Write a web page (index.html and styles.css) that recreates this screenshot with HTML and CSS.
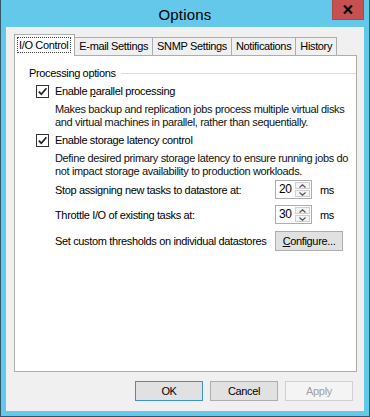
FILE: index.html
```html
<!DOCTYPE html>
<html lang="en">
<head>
  <meta charset="UTF-8" />
  <title>Options</title>
  <link rel="stylesheet" href="styles.css">
</head>
<body>
  <div class="window">
    <div class="titlebar">
      <span class="title">Options</span>
      <button class="close">
        <svg width="10" height="9" viewBox="0 0 10 9"><path d="M1 0.5 L9 8.5 M9 0.5 L1 8.5" stroke="#000" stroke-width="2.2"/></svg>
      </button>
    </div>

    <div class="client">
      <div class="tabs">
        <div class="tab active"><span class="focus">I/O Control</span></div>
        <div class="tab">E-mail Settings</div>
        <div class="tab">SNMP Settings</div>
        <div class="tab">Notifications</div>
        <div class="tab">History</div>
      </div>

      <div class="panel">
        <div class="group-title"><span>Processing options</span><div class="rule"></div></div>

        <label class="check first">
          <span class="box"><svg width="11" height="11" viewBox="0 0 11 11"><path d="M1.8 5.6 L4.3 8.2 L9.4 2.3" fill="none" stroke="#222" stroke-width="1.7"/></svg></span>
          <span>Enable <u>p</u>arallel processing</span>
        </label>
        <p class="desc">Makes backup and replication jobs process multiple virtual disks and virtual machines in parallel, rather than sequentially.</p>

        <label class="check">
          <span class="box"><svg width="11" height="11" viewBox="0 0 11 11"><path d="M1.8 5.6 L4.3 8.2 L9.4 2.3" fill="none" stroke="#222" stroke-width="1.7"/></svg></span>
          <span>Enable storage latency control</span>
        </label>
        <p class="desc">Define desired primary storage latency to ensure running jobs do not impact storage availability to production workloads.</p>

        <div class="row">
          <span class="label">Stop assigning new tasks to datastore at:</span>
          <div class="spin">
            <span class="value">20</span>
            <div class="arrows">
              <span><svg width="7" height="4" viewBox="0 0 7 4"><path d="M0.5 3.5 L3.5 0.8 L6.5 3.5" fill="none" stroke="#555" stroke-width="1.2"/></svg></span>
              <span><svg width="7" height="4" viewBox="0 0 7 4"><path d="M0.5 0.5 L3.5 3.2 L6.5 0.5" fill="none" stroke="#555" stroke-width="1.2"/></svg></span>
            </div>
          </div>
          <span class="unit">ms</span>
        </div>

        <div class="row">
          <span class="label">Throttle I/O of existing tasks at:</span>
          <div class="spin">
            <span class="value">30</span>
            <div class="arrows">
              <span><svg width="7" height="4" viewBox="0 0 7 4"><path d="M0.5 3.5 L3.5 0.8 L6.5 3.5" fill="none" stroke="#555" stroke-width="1.2"/></svg></span>
              <span><svg width="7" height="4" viewBox="0 0 7 4"><path d="M0.5 0.5 L3.5 3.2 L6.5 0.5" fill="none" stroke="#555" stroke-width="1.2"/></svg></span>
            </div>
          </div>
          <span class="unit">ms</span>
        </div>

        <div class="row last">
          <span class="label">Set custom thresholds on individual datastores</span>
          <button class="btn configure"><u>C</u>onfigure...</button>
        </div>
      </div>

      <div class="buttons">
        <button class="btn default">OK</button>
        <button class="btn">Cancel</button>
        <button class="btn disabled">Apply</button>
      </div>
    </div>
  </div>
</body>
</html>
```

FILE: styles.css
```css
body {
  margin: 0;
  font-family: 'Liberation Sans', Arial, sans-serif;
  font-size: 11px;
  color: #000;
}

.window {
  width: 370px;
  height: 417px;
  box-sizing: border-box;
  background: #64c8eb;
  border: 1px solid #2f5868;
  border-top: none;
  display: flex;
  flex-direction: column;
}

.titlebar {
  height: 27px;
  display: flex;
  align-items: center;
  justify-content: center;
  position: relative;
}

.title {
  font-size: 15px;
  color: #000;
  margin-top: 1px;
  letter-spacing: 0.2px;
}

.close {
  position: absolute;
  top: 0;
  right: 5px;
  width: 32px;
  height: 20px;
  border: 1px solid #a84a42;
  border-top: none;
  background: #c75050;
  display: flex;
  align-items: center;
  justify-content: center;
  padding: 0;
}

.client {
  flex: 1;
  margin: 0 5px 5px 5px;
  background: #f0f0f0;
  display: flex;
  flex-direction: column;
  padding: 7px 7px 0 9px;
}

.tabs {
  display: flex;
  align-items: flex-end;
  height: 21px;
  position: relative;
  z-index: 2;
  letter-spacing: -0.35px;
}

.tab {
  height: 18px;
  box-sizing: border-box;
  border: 1px solid #adadad;
  border-bottom: none;
  border-left: none;
  background: #f0f0f0;
  padding: 0 4px;
  line-height: 17px;
  white-space: nowrap;
}

.tab.active {
  height: 22px;
  border-left: 1px solid #adadad;
  background: #fff;
  padding: 3px 4px 0 3px;
  margin-bottom: -1px;
  margin-left: -1px;
  line-height: 14px;
}

.focus {
  display: inline-block;
  outline: 1px dotted #444;
  outline-offset: 0;
  line-height: 14px;
  padding: 0 2px 0 1px;
}

.panel {
  height: 317px;
  box-sizing: border-box;
  background: #fff;
  border: 1px solid #adadad;
  margin-left: -1px;
  padding: 9px 0 0 14px;
  letter-spacing: -0.35px;
}

.group-title {
  display: flex;
  align-items: center;
  gap: 5px;
  height: 16px;
}

.rule {
  flex: 1;
  height: 1px;
  background: #dcdcdc;
}

.check {
  display: flex;
  align-items: center;
  gap: 6px;
  margin: 3px 0 0 7px;
  height: 16px;
}

.check.first {
  margin-top: 2px;
}

.box {
  width: 11px;
  height: 11px;
  border: 1px solid #333;
  background: #fff;
  display: flex;
  align-items: center;
  justify-content: center;
}

.desc {
  margin: 4px 0 0 26px;
  width: 295px;
  line-height: 13px;
  color: #111;
}

.row {
  display: flex;
  align-items: center;
  margin: 1px 0 0 26px;
  height: 21px;
}

.row + .row {
  margin-top: 4px;
}

.row.last {
  margin-top: 5px;
}

.label {
  width: 220px;
  white-space: nowrap;
}

.spin {
  width: 37px;
  height: 19px;
  box-sizing: border-box;
  border: 1px solid #abadb3;
  display: flex;
  background: #fff;
}

.value {
  flex: 1;
  padding-left: 3px;
  line-height: 17px;
  font-size: 12px;
}

.arrows {
  width: 15px;
  display: flex;
  flex-direction: column;
  padding: 1px 1px 1px 0;
  gap: 1px;
}

.arrows span {
  flex: 1;
  box-sizing: border-box;
  border: 1px solid #cfcfcf;
  background: #f5f5f5;
  display: flex;
  align-items: center;
  justify-content: center;
}

.unit {
  margin-left: 8px;
}

.btn {
  font-family: inherit;
  font-size: 11px;
  letter-spacing: -0.35px;
  height: 20px;
  box-sizing: border-box;
  border: 1px solid #adadad;
  background: #e1e1e1;
  color: #000;
  padding: 0;
}

.configure {
  width: 68px;
}

.buttons {
  display: flex;
  justify-content: flex-end;
  gap: 7px;
  margin-top: 9px;
  padding-right: 4px;
}

.buttons .btn {
  width: 68px;
}

.btn.default {
  border-color: #3c8fd3;
}

.btn.disabled {
  background: #f4f4f4;
  border-color: #d0d0d0;
  color: #a0a0a0;
}
```
